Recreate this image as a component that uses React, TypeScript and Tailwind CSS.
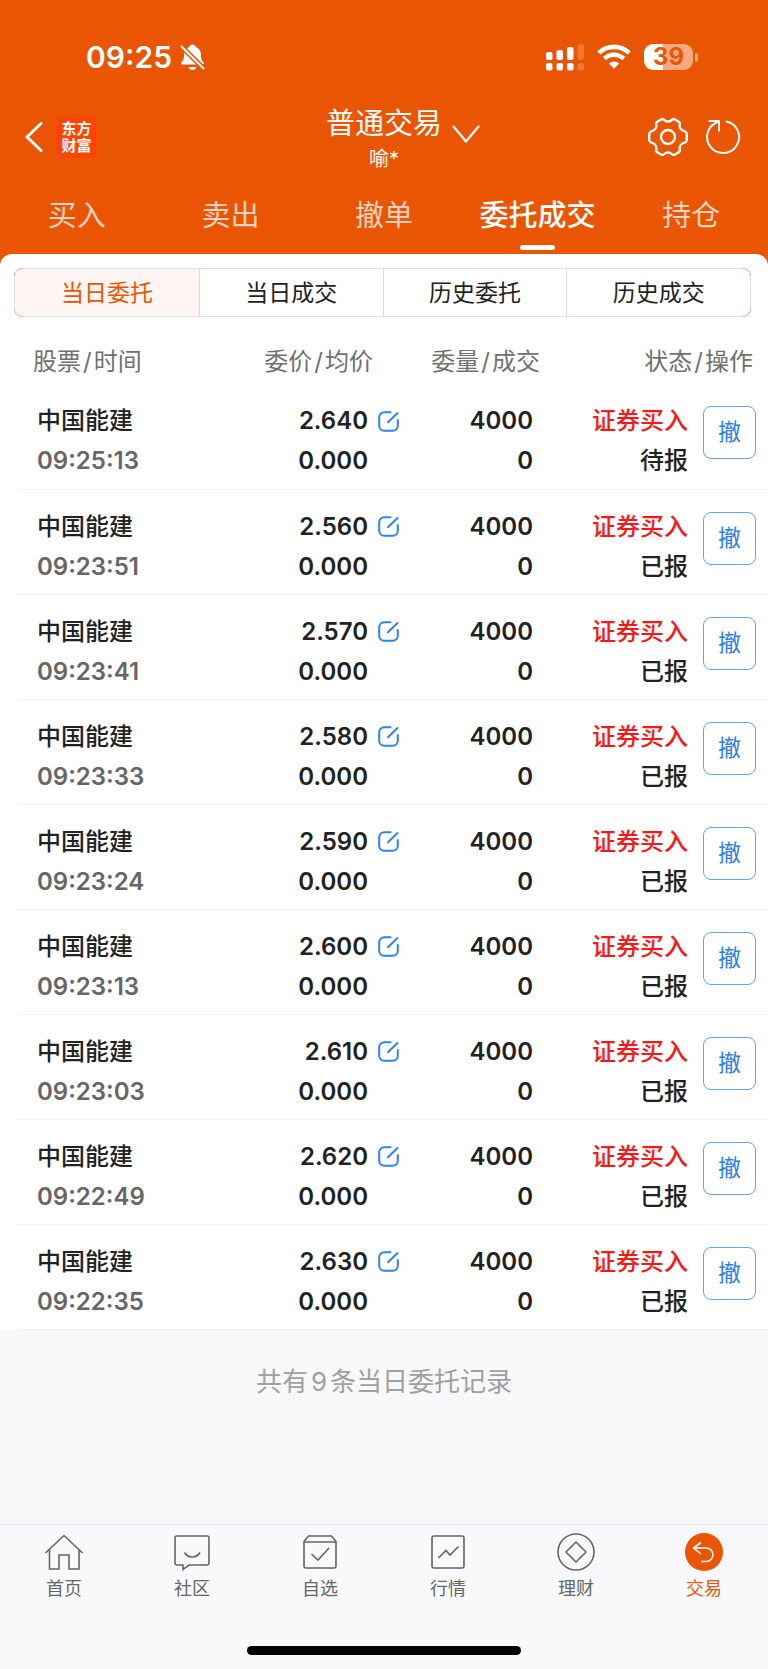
import type { ReactNode } from "react";

interface Order {
  name: string;
  time: string;
  price: string;
  avgPrice: string;
  amount: number;
  filled: number;
  side: string;
  status: string;
}

const makeOrder = (time: string, price: string, status = "已报"): Order => ({
  name: "中国能建",
  time,
  price,
  avgPrice: "0.000",
  amount: 4000,
  filled: 0,
  side: "证券买入",
  status,
});

const orders: Order[] = [
  makeOrder("09:25:13", "2.640", "待报"),
  makeOrder("09:23:51", "2.560"),
  makeOrder("09:23:41", "2.570"),
  makeOrder("09:23:33", "2.580"),
  makeOrder("09:23:24", "2.590"),
  makeOrder("09:23:13", "2.600"),
  makeOrder("09:23:03", "2.610"),
  makeOrder("09:22:49", "2.620"),
  makeOrder("09:22:35", "2.630"),
];

const tabs = ["买入", "卖出", "撤单", "委托成交", "持仓"];
const segments = ["当日委托", "当日成交", "历史委托", "历史成交"];

function StatusBar() {
  return (
    <div className="flex h-[114px] items-center justify-between pl-[86px] pr-[70px]">
      <div className="flex items-center gap-2">
        <span className="font-['Inter'] text-[30px] font-semibold leading-9">09:25</span>
        <svg width="25" height="27" viewBox="0 0 25 27" fill="none" aria-hidden="true">
          <path
            d="M12.500 0.500c1.800 0 3 1 3.400 2.400 3.400 1.200 5 4 5 7.600 0 4.600.9 6 2.500 7.600.9.900.4 2.400-.8 2.400H2.400c-1.200 0-1.700-1.500-.8-2.400 1.600-1.600 2.500-3 2.500-7.600 0-3.600 1.600-6.400 5-7.600C9.500 1.500 10.700.5 12.500.500Z"
            fill="white"
          />
          <path d="M8.500 23h8c-.4 2-2 3-4 3s-3.600-1-4-3Z" fill="white" />
          <path d="M0 1 25 26" stroke="#ea5504" strokeWidth="5" />
          <path d="M1.500 2.500 23.500 24.500" stroke="white" strokeWidth="2" strokeLinecap="round" />
        </svg>
      </div>

      <div className="flex items-center gap-[13px]">
        {/* Dual SIM signal */}
        <svg width="38" height="27" viewBox="0 0 38 27" fill="white" aria-hidden="true">
          <rect x="0" y="8" width="6.500" height="8" rx="2" />
          <rect x="10.500" y="6" width="6.500" height="10" rx="2" />
          <rect x="21" y="3" width="6.500" height="13" rx="2" />
          <rect x="31.500" y="0" width="6.500" height="16" rx="2" opacity=".2" />
          <rect x="0" y="19" width="6.500" height="7.500" rx="2" />
          <rect x="10.500" y="19" width="6.500" height="7.500" rx="2" />
          <rect x="21" y="19" width="6.500" height="7.500" rx="2" />
          <rect x="31.500" y="19" width="6.500" height="7.500" rx="2" opacity=".2" />
        </svg>

        {/* Wi-Fi */}
        <svg width="34" height="26" viewBox="0 0 34 26" fill="none" aria-hidden="true">
          <path d="M1.800 9a22 22 0 0 1 30.400 0" stroke="white" strokeWidth="4.600" />
          <path d="M7.300 14.600a14 14 0 0 1 19.400 0" stroke="white" strokeWidth="4.400" />
          <path d="M11.800 19.600a7.500 7.500 0 0 1 10.400 0L17 24.800Z" fill="white" />
        </svg>

        {/* Battery */}
        <div className="flex items-center gap-[2px]">
          <div className="flex h-[26px] w-[49px] items-center justify-center rounded-[9px] bg-linear-to-r from-white from-39% to-[#f5aa82] to-39%">
            <span className="font-['Inter'] text-[24px] font-bold leading-[26px] text-[#ea5504]">39</span>
          </div>
          <div className="h-[9px] w-[3px] rounded-r-full bg-[#f5aa82]" />
        </div>
      </div>
    </div>
  );
}

function TitleBar() {
  return (
    <div className="grid h-[72px] grid-cols-[1fr_auto_1fr]">
      <div className="flex h-[46px] items-center gap-[13px] pl-[25px]">
        <button type="button" aria-label="返回">
          <svg width="18" height="30" viewBox="0 0 18 30" fill="none">
            <path d="M16 1.500 2 15l14 13.500" stroke="white" strokeWidth="3" strokeLinecap="round" strokeLinejoin="round" />
          </svg>
        </button>
        <div className="flex h-[41px] w-[41px] flex-col items-center justify-center rounded-lg bg-[#ff4400] text-[15px] font-bold leading-[17px]">
          <span>东方</span>
          <span>财富</span>
        </div>
      </div>

      <div className="-mt-[7px] flex flex-col items-center">
        <button type="button" className="relative text-[29px] leading-[34px]">
          普通交易
          <svg
            className="absolute top-[18px] left-full ml-[10px]"
            width="28"
            height="19"
            viewBox="0 0 28 19"
            fill="none"
            aria-hidden="true"
          >
            <path d="M1.500 1.500 14 16.500l12.500-15" stroke="white" strokeWidth="2.200" strokeLinecap="round" />
          </svg>
        </button>
        <span className="text-[20px] leading-9">喻*</span>
      </div>

      <div className="flex h-[46px] items-center justify-end gap-[17px] pr-[27px]">
        <button type="button" aria-label="设置">
          <svg width="40" height="40" viewBox="0 0 40 40" fill="none" stroke="white" strokeWidth="2.400" strokeLinejoin="round">
            <path d="M13.600 2.200C14.800 1.700 15.600 2.300 16.300 3c2.200 1.900 5.200 1.900 7.400 0 .7-.7 1.500-1.300 2.700-.8l4.600 2.700c1 .6 1 1.500.8 2.600-.6 3.100 1.200 5.900 4.300 6.600 1.300.3 2.100.7 2.400 1.900.5 2.600.5 5.400 0 8-.3 1.200-1.100 1.600-2.400 1.900-3.100.7-4.900 3.500-4.300 6.600.2 1.100.2 2-.8 2.600l-4.600 2.700c-1.200.5-2-.1-2.700-.8-2.200-1.900-5.200-1.900-7.400 0-.7.7-1.500 1.300-2.700.8L9 35.100c-1-.6-1-1.500-.8-2.600.6-3.100-1.200-5.900-4.300-6.600-1.300-.3-2.100-.7-2.400-1.900-.5-2.600-.5-5.400 0-8 .3-1.200 1.100-1.600 2.400-1.900 3.100-.7 4.900-3.500 4.300-6.600C8 6.400 8 5.500 9 4.900Z" />
            <circle cx="20" cy="20" r="7" />
          </svg>
        </button>
        <button type="button" aria-label="刷新">
          <svg width="36" height="36" viewBox="0 0 36 36" fill="none" stroke="white" strokeWidth="2">
            <path d="M21.500 2.400A16 16 0 1 1 13.500 2.700" strokeLinecap="round" />
            <path d="M3.500 2h10.500v10.500" />
          </svg>
        </button>
      </div>
    </div>
  );
}

function EditIcon() {
  return (
    <svg width="21" height="21" viewBox="0 0 21 21" fill="none" stroke="#2b84f0" strokeWidth="2" strokeLinecap="round">
      <path d="M12.500 1.200H6.200a5 5 0 0 0-5 5v8.600a5 5 0 0 0 5 5h8.600a5 5 0 0 0 5-5V9" />
      <path d="M10 11.200 19.500 2" />
    </svg>
  );
}

function ColumnTitle({ first, second }: { first: string; second: string }) {
  return (
    <>
      {first}
      <span className="mx-[2px]">/</span>
      {second}
    </>
  );
}

function OrderRow({ order }: { order: Order }) {
  return (
    <tr className="border-b border-[#f1f2f4] align-top text-[24px] font-medium leading-10 text-[#222]">
      <td className="h-[105px] pt-[17px] pl-5">
        <div>{order.name}</div>
        <div className="font-['Inter'] font-semibold text-[#666]">{order.time}</div>
      </td>
      <td className="pt-[17px] font-['Inter'] font-semibold">
        <div className="flex items-center justify-end gap-[10px]">
          {order.price}
          <button type="button" aria-label="改价">
            <EditIcon />
          </button>
        </div>
        <div className="pr-[31px] text-right">{order.avgPrice}</div>
      </td>
      <td className="pt-[17px] pr-[7px] text-right font-['Inter'] font-semibold">
        <div>{order.amount}</div>
        <div>{order.filled}</div>
      </td>
      <td className="pt-[17px] text-right">
        <div className="text-[#f81818]">{order.side}</div>
        <div>{order.status}</div>
      </td>
      <td className="pt-[22px] pl-[15px]">
        <button
          type="button"
          className="flex h-[53px] w-[53px] items-center justify-center rounded-lg border border-[#62a3f5] text-[23px] font-normal leading-none text-[#2b80ea]"
        >
          撤
        </button>
      </td>
    </tr>
  );
}

const navItems: { label: string; icon: ReactNode }[] = [
  {
    label: "首页",
    icon: <path d="M1.500 20 20 2.500 38.500 20M5.500 16.500V36h9.500V22h10v14h10V16.500" />,
  },
  {
    label: "社区",
    icon: (
      <>
        <path d="M5 3h30a2 2 0 0 1 2 2v25a2 2 0 0 1-2 2H17l-6 4.500V32H5a2 2 0 0 1-2-2V5a2 2 0 0 1 2-2Z" />
        <path d="M12.500 19.500c3.500 6 12 6 15.500 0" />
      </>
    ),
  },
  {
    label: "自选",
    icon: (
      <>
        <path d="M4 8.500 8.500 3h23L36 8.500V33a2 2 0 0 1-2 2H6a2 2 0 0 1-2-2ZM4 9h32" />
        <path d="m11.500 21 6.500 6 11-12" />
      </>
    ),
  },
  {
    label: "行情",
    icon: (
      <>
        <rect x="4" y="3" width="32" height="32" rx="2" />
        <path d="m10.500 25 7.500-7.500 4 4.500 8.500-8.500" />
      </>
    ),
  },
  {
    label: "理财",
    icon: (
      <>
        <circle cx="20" cy="19" r="18" />
        <path d="m20 9 10 10-10 10-10-10Z" strokeLinejoin="round" />
      </>
    ),
  },
  {
    label: "交易",
    icon: (
      <>
        <circle cx="20" cy="19" r="19" fill="#ea5504" stroke="none" />
        <path d="m17 9.500-7.500 5.500 7.500 6M10 15h13a6.800 6.800 0 0 1 0 13.500h-6" stroke="white" />
      </>
    ),
  },
];

export default function App() {
  return (
    <div className="flex min-h-screen flex-col bg-[#f7f8fa] font-['Inter','Noto_Sans_CJK_SC',sans-serif]">
      <header className="bg-[#ea5504] text-white">
        <StatusBar />
        <TitleBar />

        {/* Main tabs, the card below overlaps the bottom edge */}
        <nav className="grid h-[84px] grid-cols-5">
          {tabs.map((tab) => {
            const active = tab === "委托成交";
            return (
              <a
                key={tab}
                href="#"
                className={`flex flex-col items-center pt-[10px] text-[29px] leading-10 ${
                  active ? "font-medium" : "font-normal text-white/75"
                }`}
              >
                {tab}
                {active && <span className="mt-[9px] h-[5px] w-[35px] rounded-full bg-white" />}
              </a>
            );
          })}
        </nav>
      </header>

      <main className="-mt-4 rounded-t-xl bg-white">
        <div className="relative mt-[14px] mr-[17px] ml-[14px]">
          <div className="grid h-[49px] grid-cols-4 overflow-hidden rounded-lg border border-[#f0a07c]">
            {segments.map((segment, i) => (
              <button
                key={segment}
                type="button"
                className={`text-[23px] leading-8 ${
                  i === 0 ? "bg-[#fff5f2] text-[#ea5504]" : "border-l border-[#d9dbe2] text-[#222]"
                }`}
              >
                {segment}
              </button>
            ))}
          </div>
          {/* Grey edges, only the rounded corners stay orange */}
          <span className="absolute inset-x-2 top-0 h-px bg-[#dfe1e8]" />
          <span className="absolute inset-x-2 bottom-0 h-px bg-[#dfe1e8]" />
          <span className="absolute inset-y-2 left-0 w-px bg-[#dfe1e8]" />
          <span className="absolute inset-y-2 right-0 w-px bg-[#dfe1e8]" />
        </div>

        <div className="ml-[17px]">
          <table className="w-full table-fixed border-collapse">
            <colgroup>
              <col />
              <col className="w-[158px]" />
              <col className="w-[141px]" />
              <col className="w-[148px]" />
              <col className="w-[80px]" />
            </colgroup>
            <thead>
              <tr className="text-[24px] leading-8 text-[#707070]">
                <th className="h-[67px] pt-[22px] pl-4 text-left font-normal">
                  <ColumnTitle first="股票" second="时间" />
                </th>
                <th className="pt-[22px] pr-[26px] text-right font-normal">
                  <ColumnTitle first="委价" second="均价" />
                </th>
                <th className="pt-[22px] text-right font-normal">
                  <ColumnTitle first="委量" second="成交" />
                </th>
                <th colSpan={2} className="pt-[22px] pr-[15px] text-right font-normal">
                  <ColumnTitle first="状态" second="操作" />
                </th>
              </tr>
            </thead>
            <tbody>
              {orders.map((order) => (
                <OrderRow key={order.time} order={order} />
              ))}
            </tbody>
          </table>
        </div>
      </main>

      <p className="pt-8 text-center text-[26px] leading-10 text-[#a0a0a0]">
        共有<span className="mx-[3px]">9</span>条当日委托记录
      </p>

      <footer className="mt-auto border-t border-[#e9eaef] bg-[#f8f9fb] pb-[14px]">
        <nav className="grid grid-cols-6 pt-2">
          {navItems.map((item) => (
            <a
              key={item.label}
              href="#"
              className={`flex flex-col items-center text-[18px] leading-8 ${
                item.label === "交易" ? "text-[#ea5504]" : "text-[#666]"
              }`}
            >
              <svg
                width="40"
                height="40"
                viewBox="0 0 40 40"
                fill="none"
                stroke="currentColor"
                strokeWidth="1.600"
                aria-hidden="true"
              >
                {item.icon}
              </svg>
              {item.label}
            </a>
          ))}
        </nav>
        <div className="mx-auto mt-[41px] h-[9px] w-[274px] rounded-full bg-black" />
      </footer>
    </div>
  );
}
